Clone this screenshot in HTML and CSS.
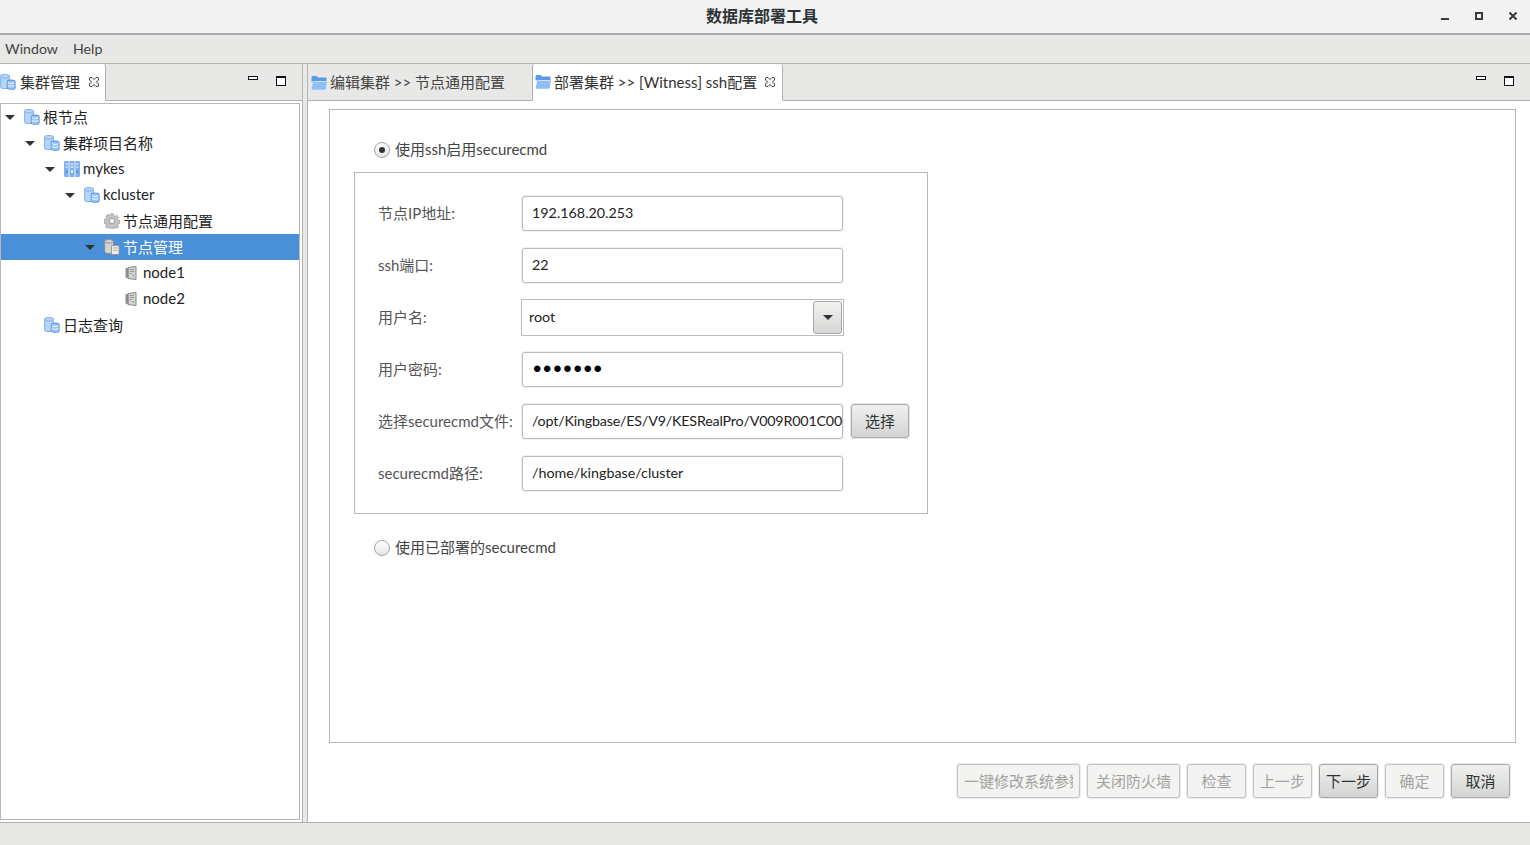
FILE: index.html
```html
<!DOCTYPE html>
<html lang="zh-CN">
<head>
<meta charset="utf-8">
<title>数据库部署工具</title>
<link rel="stylesheet" href="styles.css">
</head>
<body>
<svg class="defs" width="0" height="0" aria-hidden="true">
  <symbol id="db" viewBox="0 0 16 17" preserveAspectRatio="none">
    <path d="M.7 2.500C.7 1.200 2.800.6 5 .6s4.300.6 4.300 1.900v11c0 1.200-2.100 1.900-4.300 1.900S.7 14.700.7 13.500z" fill="#b9d6f8" stroke="#7fb0ec" stroke-width="1.100"/>
    <path d="M1.500 3.600c1.700 1.100 5.300 1.100 7 0" fill="none" stroke="#7fb0ec"/>
    <path d="M7.200 8.200c0-1.100 1.800-1.700 3.900-1.700s4 .6 4 1.700v6.300c0 1.100-1.900 1.800-4 1.800s-3.900-.7-3.900-1.800z" fill="#9dc5f5" stroke="#5f9be6" stroke-width="1.100"/>
    <path d="M7.800 9.300c1.600 1 5.200 1 6.700 0M7.800 12.300c1.600 1 5.200 1 6.700 0" fill="none" stroke="#f1f7fe"/>
  </symbol>
  <symbol id="nodes" viewBox="0 0 16 17" preserveAspectRatio="none">
    <path d="M.7 2.500C.7 1.200 2.800.6 5 .6s4.300.6 4.300 1.900v11c0 1.200-2.100 1.900-4.300 1.900S.7 14.700.7 13.500z" fill="#d4d4d4" stroke="#8e8e8e"/>
    <path d="M1.500 3.600c1.700 1.100 5.300 1.100 7 0" fill="none" stroke="#8e8e8e"/>
    <path d="M7.500 7h7.500v9.500H7.500z" fill="#eee" stroke="#9a9a9a"/>
    <path d="M9 9.500h4.500M9 12h4.500" stroke="#aaa"/>
  </symbol>
  <symbol id="cluster" viewBox="0 0 16 16">
    <rect x="0" y="0" width="16" height="16" rx="1" fill="#7fb2ee"/>
    <path d="M5 0v16M11 0v16" stroke="#d9e8fb" stroke-width="1.200"/>
    <path d="M1.500 3h2M6.500 3h3M12.500 3h2M1.500 6h2M6.500 6h3M12.500 6h2" stroke="#fff"/>
    <rect x="7" y="9.500" width="2" height="2" fill="#fff"/>
    <rect x="2" y="10" width="1.500" height="1.500" fill="#3f7fd0"/>
    <rect x="12.500" y="10" width="1.500" height="1.500" fill="#3f7fd0"/>
  </symbol>
  <symbol id="gear" viewBox="0 0 16 16">
    <path d="M6.600 .8h2.800l.4 2 1.400.6 1.700-1.100 2 2-1.100 1.700.6 1.400 2 .4v2.800l-2 .4-.6 1.400 1.100 1.700-2 2-1.700-1.100-1.400.6-.4 2H6.600l-.4-2-1.400-.6-1.700 1.100-2-2 1.100-1.700-.6-1.400-2-.4V6.800l2-.4.600-1.400L1.500 3.300l2-2 1.700 1.100 1.400-.6z" transform="translate(.4 .1) scale(.95)" fill="#c4c4c4" stroke="#949494" stroke-width=".7"/>
    <circle cx="8" cy="8" r="2.800" fill="#f2f2f2" stroke="#8c8c8c" stroke-width=".8"/>
  </symbol>
  <symbol id="server" viewBox="0 0 16 16">
    <g transform="translate(-1.500 0)">
      <path d="M5.500 2.500 13.500 1.500v13l-8-1z" fill="#d2d2d2" stroke="#8a8a8a"/>
      <path d="M3 3.500 6 2.500v11l-3-1z" fill="#8f8f8f"/>
      <path d="M7.500 4.500h4M7.500 6.500h4M7.500 8.500h2" stroke="#9a9a9a"/>
      <rect x="10" y="10" width="1.500" height="1.200" fill="#5fc65f"/>
    </g>
  </symbol>
  <symbol id="folder" viewBox="0 0 16 15">
    <path d="M.5 13V2c0-1 .5-1.500 1.500-1.500h3.500L7 2h7.500c.8 0 1 .4 1 1v3H.5z" fill="#5b9ae6"/>
    <path d="M.5 14.300 2 6.500c.1-.7.4-1 1-1h12.500c.4 0 .5.200.5.500l-1.200 7.300c-.1.700-.5 1-1.200 1z" fill="#8fbff5"/>
    <path d="M2.500 6h13" stroke="#cfe3fb"/>
  </symbol>
  <symbol id="close" viewBox="0 0 10 10">
    <path d="M1 .5 3 .5 5 2.500 7 .5 9 .5 9.500 1 9.500 3 7.500 5 9.500 7 9.500 9 9 9.500 7 9.500 5 7.500 3 9.500 1 9.500.5 9 .5 7 2.500 5 .5 3 .5 1z" fill="#f4f4f4" stroke="#333" stroke-width=".9"/>
  </symbol>
</svg>

<header class="titlebar">
  <h1 class="app-title">数据库部署工具</h1>
  <div class="window-controls">
    <svg class="win-icon" viewBox="0 0 10 10"><rect x="1" y="7" width="8" height="2" fill="#3a3a3a"/></svg>
    <svg class="win-icon" viewBox="0 0 10 10"><rect x="2" y="2" width="6" height="6" fill="none" stroke="#3a3a3a" stroke-width="2"/></svg>
    <svg class="win-icon" viewBox="0 0 10 10"><path d="M1.500 1.500l7 7M8.500 1.500l-7 7" stroke="#3a3a3a" stroke-width="2"/></svg>
  </div>
</header>

<nav class="menubar">
  <span class="menu-item">Window</span>
  <span class="menu-item">Help</span>
</nav>

<main class="workbench">
  <section class="view view-left">
    <div class="tabbar">
      <div class="tab tab-active tab-left">
        <svg class="icon"><use href="#db"/></svg>
        <span>集群管理</span>
        <svg class="tab-close"><use href="#close"/></svg>
      </div>
      <div class="view-tools">
        <span class="tool-min"></span>
        <span class="tool-max"></span>
      </div>
    </div>
    <div class="tree-wrap">
      <ul class="tree">
        <li class="row lvl-0"><i class="twist"></i><svg class="icon"><use href="#db"/></svg><span>根节点</span></li>
        <li class="row lvl-1"><i class="twist"></i><svg class="icon"><use href="#db"/></svg><span>集群项目名称</span></li>
        <li class="row lvl-2"><i class="twist"></i><svg class="icon"><use href="#cluster"/></svg><span>mykes</span></li>
        <li class="row lvl-3"><i class="twist"></i><svg class="icon"><use href="#db"/></svg><span>kcluster</span></li>
        <li class="row lvl-4"><i class="twist-none"></i><svg class="icon"><use href="#gear"/></svg><span>节点通用配置</span></li>
        <li class="row lvl-4 row-selected"><i class="twist"></i><svg class="icon"><use href="#nodes"/></svg><span>节点管理</span></li>
        <li class="row lvl-5"><i class="twist-none"></i><svg class="icon"><use href="#server"/></svg><span>node1</span></li>
        <li class="row lvl-5"><i class="twist-none"></i><svg class="icon"><use href="#server"/></svg><span>node2</span></li>
        <li class="row lvl-1"><i class="twist-none"></i><svg class="icon"><use href="#db"/></svg><span>日志查询</span></li>
      </ul>
    </div>
  </section>

  <section class="view view-right">
    <div class="tabbar">
      <div class="tab tab-inactive">
        <svg class="icon"><use href="#folder"/></svg>
        <span>编辑集群 &gt;&gt; 节点通用配置</span>
      </div>
      <div class="tab tab-active tab-doc">
        <svg class="icon"><use href="#folder"/></svg>
        <span>部署集群 &gt;&gt; [Witness] ssh配置</span>
        <svg class="tab-close"><use href="#close"/></svg>
      </div>
      <div class="view-tools">
        <span class="tool-min"></span>
        <span class="tool-max"></span>
      </div>
    </div>
    <div class="editor">
      <div class="page">
        <label class="radio-line radio-first"><i class="radio radio-on"></i><span>使用ssh启用securecmd</span></label>
        <div class="group">
          <div class="form-row"><span class="label">节点IP地址:</span><div class="field">192.168.20.253</div></div>
          <div class="form-row"><span class="label">ssh端口:</span><div class="field">22</div></div>
          <div class="form-row form-row-combo"><span class="label">用户名:</span><div class="combo"><span class="combo-text">root</span><span class="combo-btn"><i class="twist"></i></span></div></div>
          <div class="form-row"><span class="label">用户密码:</span><div class="field field-pass">•••••••</div></div>
          <div class="form-row"><span class="label">选择securecmd文件:</span><div class="field field-path">/opt/Kingbase/ES/V9/KESRealPro/V009R001C00</div><button class="btn btn-pick" type="button">选择</button></div>
          <div class="form-row"><span class="label">securecmd路径:</span><div class="field">/home/kingbase/cluster</div></div>
        </div>
        <label class="radio-line radio-second"><i class="radio"></i><span>使用已部署的securecmd</span></label>
      </div>
      <div class="actions">
        <button class="btn btn-off btn-wide" type="button"><span class="clip">一键修改系统参数</span></button>
        <button class="btn btn-off btn-fw" type="button">关闭防火墙</button>
        <button class="btn btn-off" type="button">检查</button>
        <button class="btn btn-off" type="button">上一步</button>
        <button class="btn" type="button">下一步</button>
        <button class="btn btn-off" type="button">确定</button>
        <button class="btn" type="button">取消</button>
      </div>
    </div>
  </section>
</main>

<footer class="statusbar"></footer>
</body>
</html>
```

FILE: styles.css
```css
* { box-sizing: border-box; }
html, body { margin: 0; padding: 0; }
body {
  width: 1530px;
  height: 845px;
  overflow: hidden;
  display: flex;
  flex-direction: column;
  background: #e8e8e7;
  color: #2e3436;
  font-family: "Lato", "Noto Sans CJK SC", sans-serif;
  font-size: 15px;
}
.defs { position: absolute; }

.titlebar {
  height: 35px;
  flex: none;
  display: flex;
  align-items: center;
  justify-content: center;
  padding: 0 6px 4px 0;
  background: #f3f3f3;
  border-bottom: 2px solid #a8a8a6;
  position: relative;
}
.app-title { margin: 0; font-size: 16px; font-weight: 700; color: #2e3436; }
.window-controls {
  position: absolute;
  right: 0; top: 0; height: 32px;
  display: flex;
  align-items: center;
  gap: 24px;
  padding-right: 12px;
}
.win-icon { width: 10px; height: 10px; }

.menubar {
  height: 28px;
  flex: none;
  display: flex;
  align-items: center;
  gap: 15px;
  padding: 0 0 2px 5px;
  color: #444;
  font-size: 14.2px;
}

.workbench { flex: 1; display: flex; gap: 4px; min-height: 0; border-top: 1px solid #b4b4b2; }
.view { display: flex; flex-direction: column; }
.view-left { width: 303px; border-right: 1px solid #b4b4b2; }
.view-right { flex: 1; border-left: 1px solid #b4b4b2; }

.tabbar {
  height: 37px;
  flex: none;
  display: flex;
  border-bottom: 1px solid #b0b0ae;
  background: #e8e8e7;
}
.tab {
  display: flex;
  align-items: center;
  height: 37px;
  gap: 3px;
  white-space: nowrap;
  color: #333;
}
.tab span { padding-bottom: 2px; }
.tab-active {
  background: #fff;
  border-right: 1px solid #b0b0ae;
  border-top-right-radius: 3px;
  border-bottom: 1px solid #fff;
}
.tab-left { width: 106px; padding-left: 0; gap: 4px; }
.tab-inactive { width: 224px; padding-left: 3px; color: #444; border-right: 0; }
.tab-doc { width: 251px; padding-left: 2px; border-left: 1px solid #b0b0ae; border-top-left-radius: 3px; }
.icon { width: 16px; height: 16px; flex: none; }
.tab-close { width: 10px; height: 10px; margin-left: 5px; flex: none; }

.view-tools {
  margin-left: auto;
  display: flex;
  align-items: flex-start;
  gap: 18px;
  padding: 12px 16px 0 0;
}
.tool-min { display: block; width: 10px; height: 4px; border: 1px solid #111; background: #fff; }
.tool-max { display: block; width: 10px; height: 10px; border: 1px solid #111; border-top-width: 2px; background: #fff; }

.tree-wrap { flex: 1; min-height: 0; background: #fff; padding: 2px 2px 2px 0; }
.tree {
  list-style: none;
  margin: 0;
  padding: 0;
  height: 100%;
  border: 1px solid #b8b8b8;
  background: #fff;
}
.row { height: 26px; display: flex; align-items: center; white-space: nowrap; color: #222; }
.row span { padding-bottom: 2px; }
.lvl-0 { padding-left: 4px; }
.lvl-1 { padding-left: 24px; }
.lvl-2 { padding-left: 44px; }
.lvl-3 { padding-left: 64px; }
.lvl-4 { padding-left: 84px; }
.lvl-5 { padding-left: 104px; }
.twist { display: block; flex: none; width: 0; height: 0; margin-right: 9px; border-left: 5px solid transparent; border-right: 5px solid transparent; border-top: 5px solid #2e3436; }
.twist-none { display: block; flex: none; width: 19px; height: 1px; }
.row .icon { margin-right: 3px; }
.row-selected { background: #4a90d9; color: #fff; }

.editor { flex: 1; min-height: 0; background: #fff; display: flex; flex-direction: column; padding: 8px 14px 24px 21px; }
.page {
  height: 634px;
  flex: none;
  border: 1px solid #b8b8b8;
  padding: 30px 0 0 24px;
}
.radio-line { display: flex; align-items: center; gap: 5px; height: 20px; margin-left: 20px; color: #444; }
.radio-line span { padding-bottom: 3px; }
.radio { display: block; width: 16px; height: 16px; border-radius: 50%; border: 1px solid #a4a4a2; background: linear-gradient(#fff, #e4e4e2); position: relative; }
.radio-on::after { content: ""; position: absolute; left: 4px; top: 4px; width: 6px; height: 6px; border-radius: 50%; background: #2e3436; }
.group {
  width: 574px;
  height: 342px;
  margin-top: 12px;
  border: 1px solid #b8b8b8;
  padding: 23px 0 0 23px;
}
.radio-second { margin-top: 24px; }
.form-row { display: flex; align-items: center; height: 35px; margin-bottom: 17px; }
.form-row-combo { margin-top: -1px; height: 37px; margin-bottom: 16px; }
.label { width: 144px; flex: none; color: #555; white-space: nowrap; padding-bottom: 2px; }
.field {
  width: 321px;
  height: 35px;
  flex: none;
  border: 1px solid #bdbdbb;
  border-radius: 3px;
  box-shadow: 0 0 0 1px #efefee;
  padding: 0 1px 0 9px;
  font-size: 14.3px;
  line-height: 31px;
  white-space: nowrap;
  overflow: hidden;
  color: #222;
  background: #fff;
}
.field-path { letter-spacing: -0.2px; }
.field-pass { font-family: "Liberation Sans", sans-serif; font-size: 24px; letter-spacing: 1.7px; color: #000; padding-left: 10px; }
.combo {
  width: 323px;
  height: 37px;
  margin-left: -1px;
  flex: none;
  display: flex;
  align-items: center;
  justify-content: space-between;
  border: 1px solid #bdbdbb;
  padding-left: 7px;
  color: #222;
  font-size: 14.3px;
}
.combo-text { padding-bottom: 2px; }
.combo-btn {
  width: 29px;
  height: 33px;
  margin-right: 1px;
  display: flex;
  align-items: center;
  justify-content: center;
  border: 1px solid #a8a8a6;
  border-radius: 3px;
  background: linear-gradient(#f2f2f1, #d6d6d4);
}
.combo-btn .twist { margin: 0; }
.btn {
  font: inherit;
  height: 34px;
  width: 59px;
  padding: 0 0 2px;
  flex: none;
  border: 1px solid #a8a8a6;
  border-radius: 3px;
  background: linear-gradient(#f0f0ef, #d4d4d2);
  box-shadow: 0 0 0 1px #eaeae9;
  color: #2e3436;
  white-space: nowrap;
}
.btn-pick { margin-left: 8px; margin-top: -1px; width: 58px; }
.btn-off { background: #f3f3f2; color: #a2a2a0; border-color: #c4c4c2; }
.btn-wide { width: 123px; padding: 0 6px 2px; overflow: hidden; }
.clip { display: block; overflow: hidden; }
.btn-fw { width: 93px; }
.actions { display: flex; justify-content: flex-end; gap: 7px; margin: 21px 6px 0 0; }

.statusbar { height: 23px; flex: none; border-top: 1px solid #b0b0ae; background: #e8e8e7; }
```
